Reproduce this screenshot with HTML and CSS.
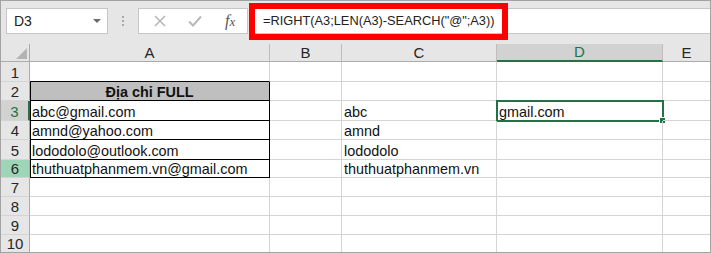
FILE: index.html
```html
<!DOCTYPE html>
<html lang="vi">
<head>
<meta charset="utf-8">
<link rel="stylesheet" href="styles.css">
</head>
<body>
<div class="app">
  <div class="toolbar">
    <div class="namebox"><span class="name">D3</span><span class="caret"></span></div>
    <div class="dots"><i></i><i></i><i></i></div>
    <div class="btns">
      <svg class="ico" width="14" height="14" viewBox="0 0 14 14"><path d="M2 2L12 12M12 2L2 12" stroke="#b8b8b8" stroke-width="1.6" fill="none"/></svg>
      <svg class="ico" width="16" height="14" viewBox="0 0 16 14"><path d="M2 7.5L6 11.5L14 2.5" stroke="#b8b8b8" stroke-width="2" fill="none"/></svg>
      <span class="fx"><span class="f">f</span><span class="x">x</span></span>
    </div>
    <div class="formula">=RIGHT(A3;LEN(A3)-SEARCH("@";A3))</div>
    <div class="redbox"></div>
  </div>
  <div class="sheet">
    <div class="c corner"><span class="tri"></span></div>
    <div class="c ch">A</div>
    <div class="c ch">B</div>
    <div class="c ch">C</div>
    <div class="c ch act">D</div>
    <div class="c ch last">E</div>

    <div class="c rh">1</div><div class="c t-top"></div><div class="c"></div><div class="c"></div><div class="c"></div><div class="c last"></div>
    <div class="c rh">2</div><div class="c tb head">Địa chỉ FULL</div><div class="c"></div><div class="c"></div><div class="c"></div><div class="c last"></div>
    <div class="c rh act">3</div><div class="c tb">abc@gmail.com</div><div class="c"></div><div class="c">abc</div><div class="c sel">gmail.com<span class="selbox"><span class="handle"></span></span></div><div class="c last"></div>
    <div class="c rh">4</div><div class="c tb">amnd@yahoo.com</div><div class="c"></div><div class="c">amnd</div><div class="c"></div><div class="c last"></div>
    <div class="c rh">5</div><div class="c tb">lododolo@outlook.com</div><div class="c"></div><div class="c">lododolo</div><div class="c"></div><div class="c last"></div>
    <div class="c rh green">6</div><div class="c tb">thuthuatphanmem.vn@gmail.com</div><div class="c"></div><div class="c">thuthuatphanmem.vn</div><div class="c"></div><div class="c last"></div>
    <div class="c rh">7</div><div class="c"></div><div class="c"></div><div class="c"></div><div class="c"></div><div class="c last"></div>
    <div class="c rh">8</div><div class="c"></div><div class="c"></div><div class="c"></div><div class="c"></div><div class="c last"></div>
    <div class="c rh">9</div><div class="c"></div><div class="c"></div><div class="c"></div><div class="c"></div><div class="c last"></div>
    <div class="c rh end">10</div><div class="c end"></div><div class="c end"></div><div class="c end"></div><div class="c end"></div><div class="c last end"></div>
  </div>
</div>
</body>
</html>
```
FILE: styles.css
```css
* { box-sizing: border-box; }
html, body { margin: 0; padding: 0; background: #fff; }
.app {
  width: 711px;
  height: 253px;
  border: 1px solid #a3a3a3;
  background: #e6e6e6;
  overflow: hidden;
  font-family: "Liberation Sans", Arial, sans-serif;
  color: #1e1e1e;
}
.toolbar {
  position: relative;
  height: 43px;
  display: flex;
  align-items: flex-start;
  padding-top: 7px;
}
.namebox {
  margin-left: 5px;
  width: 102px;
  height: 26px;
  background: #fff;
  border: 1px solid #c6c6c6;
  display: flex;
  align-items: center;
  justify-content: space-between;
  padding: 0 6px 0 7px;
}
.name { font-size: 14px; color: #222; }
.caret {
  width: 0; height: 0;
  border-left: 4px solid transparent;
  border-right: 4px solid transparent;
  border-top: 4px solid #6a6a6a;
}
.dots {
  width: 30px;
  height: 26px;
  display: flex;
  flex-direction: column;
  align-items: center;
  justify-content: center;
  gap: 2px;
}
.dots i { display: block; width: 2px; height: 2px; background: #a8a8a8; }
.btns {
  width: 110px;
  height: 26px;
  background: #fff;
  border: 1px solid #c6c6c6;
  display: flex;
  align-items: center;
  padding-left: 14px;
  gap: 20px;
}
.fx {
  font-family: "Liberation Serif", "Times New Roman", serif;
  font-style: italic;
  color: #555;
  font-size: 16px;
  margin-left: 2px;
}
.fx .x { font-size: 13px; }
.formula {
  margin-left: 1px;
  flex: 1;
  height: 26px;
  background: #fff;
  border-top: 1px solid #c6c6c6;
  border-bottom: 1px solid #c6c6c6;
  font-size: 12.8px;
  line-height: 24px;
  padding-left: 14px;
  color: #222;
  white-space: nowrap;
}
.redbox {
  position: absolute;
  left: 248px;
  top: 2px;
  width: 259px;
  height: 37px;
  border: 6px solid #ff0000;
}
.sheet {
  display: grid;
  grid-template-columns: 29px 240px 72px 155px 166px 47px;
  grid-template-rows: 18px 20px 19px 20px 19px 20px 18px 19px 19px 19px 17px;
  background: #fff;
}
.c {
  border-right: 1px solid #d4d4d4;
  border-bottom: 1px solid #d4d4d4;
  font-size: 14.4px;
  line-height: 16px;
  padding-left: 2px;
  display: flex;
  align-items: flex-end;
  white-space: nowrap;
  position: relative;
  color: #111;
}
.c.last { border-right: none; }
.c.end { border-bottom: none; }
.corner, .ch, .rh { background: #e6e6e6; }
.corner { border-right: 1px solid #ababab; border-bottom: 1px solid #ababab; }
.tri {
  position: absolute;
  right: 2px;
  bottom: 2px;
  width: 0; height: 0;
  border-left: 11px solid transparent;
  border-bottom: 11px solid #b4b4b4;
}
.ch {
  justify-content: center;
  align-items: center;
  padding: 0;
  font-size: 15px;
  color: #262626;
  border-right: 1px solid #bdbdbd;
  border-bottom: 1px solid #ababab;
}
.ch.last { border-right: none; }
.ch.act {
  background: #d2d2d2;
  color: #217346;
  border-bottom: 2px solid #217346;
}
.rh {
  justify-content: center;
  padding: 0;
  font-size: 15px;
  line-height: 17px;
  color: #262626;
  border-right: 1px solid #ababab;
  border-bottom: 1px solid #d4d4d4;
}
.rh.act {
  background: #d2d2d2;
  color: #217346;
  border-right: 2px solid #217346;
}
.rh.green { background: #9fd5b7; }
.t-top { border-bottom-color: #000; }
.tb {
  border-right-color: #000;
  border-bottom-color: #000;
  box-shadow: inset 1px 0 0 #000;
}
.head {
  background: #bfbfbf;
  font-weight: bold;
  justify-content: center;
  padding-left: 0;
}
.selbox {
  position: absolute;
  left: -1px;
  top: -1px;
  width: 168px;
  height: 22px;
  border: 2px solid #217346;
}
.handle {
  position: absolute;
  right: -4px;
  bottom: -4px;
  width: 7px;
  height: 7px;
  background: #217346;
  border: 1px solid #fff;
}
```
